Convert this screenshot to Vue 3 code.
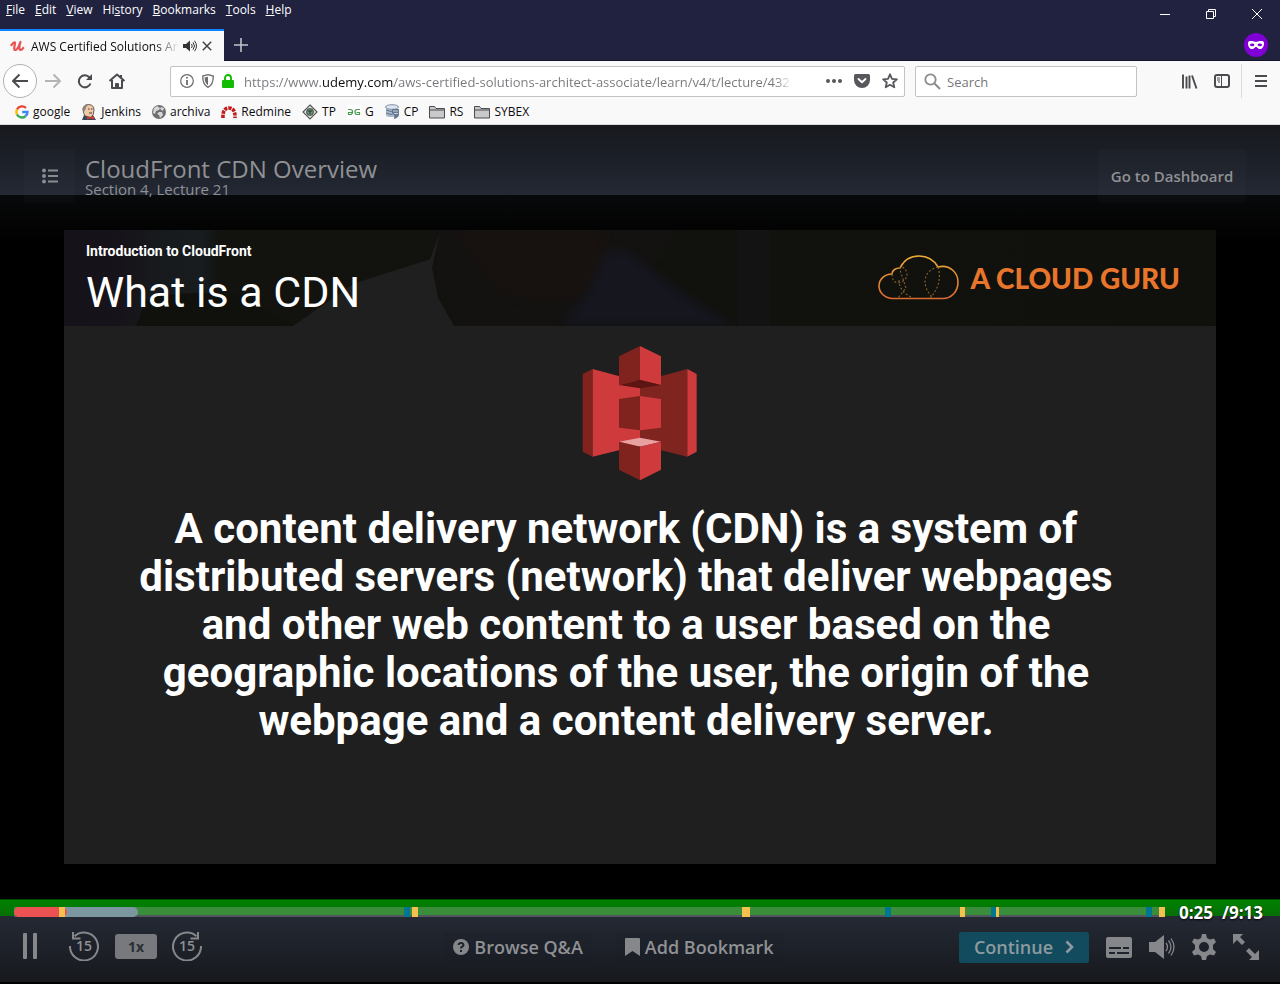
<script setup>
import { ref } from 'vue'

const menus = [
  ['', 'F', 'ile'], ['', 'E', 'dit'], ['', 'V', 'iew'], ['Hi', 's', 'tory'],
  ['', 'B', 'ookmarks'], ['', 'T', 'ools'], ['', 'H', 'elp'],
]
const bookmarks = [
  { name: 'google', icon: 'google' },
  { name: 'Jenkins', icon: 'jenkins' },
  { name: 'archiva', icon: 'globe' },
  { name: 'Redmine', icon: 'redmine' },
  { name: 'TP', icon: 'tp' },
  { name: 'G', icon: 'gg' },
  { name: 'CP', icon: 'db' },
  { name: 'RS', icon: 'folder' },
  { name: 'SYBEX', icon: 'folder' },
]
const url = ref('https://www.udemy.com/aws-certified-solutions-architect-associate/learn/v4/t/lecture/4321')
const search = ref('')

const trackLength = 1151
const markers = [
  { at: 45, size: 6, kind: 'note' },
  { at: 390, size: 6, kind: 'quiz' },
  { at: 398, size: 6, kind: 'note' },
  { at: 728, size: 8, kind: 'note' },
  { at: 871, size: 6, kind: 'quiz' },
  { at: 946, size: 5, kind: 'note' },
  { at: 977, size: 5, kind: 'quiz' },
  { at: 982, size: 3, kind: 'note' },
  { at: 1132, size: 6, kind: 'quiz' },
  { at: 1145, size: 6, kind: 'note' },
]
const share = (n) => `${(n / trackLength) * 100}%`
</script>

<template>
  <div class="window">
    <header class="titlebar">
      <div class="menu-row">
        <nav class="menus">
          <button v-for="m in menus" :key="m.join('')" class="menu">{{ m[0] }}<u>{{ m[1] }}</u>{{ m[2] }}</button>
        </nav>
        <div class="window-buttons">
          <button aria-label="Minimize"><svg width="12" height="12" viewBox="0 0 12 12"><path d="M1 6.500h10" /></svg></button>
          <button aria-label="Restore"><svg width="12" height="12" viewBox="0 0 12 12"><path d="M1.500 3.500h7v7h-7zM3.500 3.500v-2h7v7h-2" /></svg></button>
          <button aria-label="Close"><svg width="12" height="12" viewBox="0 0 12 12"><path d="M1 1l10 10M11 1L1 11" /></svg></button>
        </div>
      </div>
      <div class="tab-row">
        <div class="tab">
          <svg class="tab-logo" width="15" height="14" viewBox="0 0 15 14"><path d="M1.500 6C3 4 5 2.500 5 4c0 1.800-2 7 .3 7C8 11 9.500 5 10.500 3 9.500 6 8.500 11 10.600 11c1.300 0 2-1 2.600-2" fill="none" stroke="#ec5252" stroke-width="2.200" stroke-linecap="round" stroke-linejoin="round" /></svg>
          <span class="tab-title">AWS Certified Solutions Architect</span>
          <button aria-label="Mute tab"><svg width="14" height="12" viewBox="0 0 14 12"><path d="M0 4h3l4-3.500v11L3 8H0z" fill="#333" /><path d="M8.500 4q1.500 2 0 4M10 2.300q3 3.700 0 7.400M11.500.8q4 5.200 0 10.400" fill="none" stroke="#333" /></svg></button>
          <button class="tab-close" aria-label="Close tab"><svg width="10" height="10" viewBox="0 0 10 10"><path d="M.8.8l8.400 8.400M9.200.8L.8 9.200" stroke="#444" stroke-width="1.500" /></svg></button>
        </div>
        <button class="new-tab" aria-label="New tab"><svg width="14" height="14" viewBox="0 0 14 14"><path d="M7 0v14M0 7h14" stroke="#c3c3cb" stroke-width="1.600" /></svg></button>
        <svg class="private" width="24" height="24" viewBox="0 0 24 24"><circle cx="12" cy="12" r="12" fill="#8000d7" /><path d="M4 10c0-2 2-2.300 4-2 2 .2 2.500 1 4 1s2-.8 4-1c2-.3 4 0 4 2 0 4-2 6-4 6-2.500 0-2.500-2-4-2s-1.500 2-4 2c-2 0-4-2-4-6z" fill="#fff" /><ellipse cx="8.200" cy="11.900" rx="2.200" ry="1.400" fill="#8000d7" /><ellipse cx="15.800" cy="11.900" rx="2.200" ry="1.400" fill="#8000d7" /></svg>
      </div>
    </header>

    <div class="toolbar">
      <div class="nav-buttons">
        <button class="back" aria-label="Back"><svg width="18" height="16" viewBox="0 0 18 16"><path d="M17 8H2.500M8.500 1.500L2 8l6.500 6.500" /></svg></button>
        <button class="forward" aria-label="Forward"><svg width="18" height="16" viewBox="0 0 18 16"><path d="M1 8h14.500M9.500 1.500L16 8l-6.500 6.500" /></svg></button>
        <button class="reload" aria-label="Reload"><svg width="16" height="16" viewBox="0 0 16 16"><path d="M12.500 4.500A6 6 0 1 0 13.500 10.500" /><path d="M15 1V7H9z" /></svg></button>
        <button class="home" aria-label="Home"><svg width="18" height="16" viewBox="0 0 18 16"><path d="M1.500 8L9 1.500 16.500 8M4 7v8h10V7" /><path d="M8 15v-4h2v4" /><path d="M13 2v3" /></svg></button>
      </div>
      <div class="address">
        <svg width="14" height="14" viewBox="0 0 14 14"><circle cx="7" cy="7" r="6.300" fill="none" stroke="#6b6b70" stroke-width="1.200" /><path d="M7 3v1.600M7 6v5" stroke="#6b6b70" stroke-width="1.800" /></svg>
        <svg width="12" height="14" viewBox="0 0 12 14"><path d="M6 .7L11.300 2C11.300 8 10 11.500 6 13.300 2 11.500.7 8 .7 2z" fill="none" stroke="#6b6b70" stroke-width="1.300" /><path d="M6 2.800v8.500C3.800 10 2.800 8 2.600 3.600z" fill="#6b6b70" /></svg>
        <svg width="12" height="14" viewBox="0 0 12 14"><path d="M3 7V4a3 3 0 0 1 6 0v3" fill="none" stroke="#12bc00" stroke-width="1.900" /><rect y="6" width="12" height="8" rx="1" fill="#12bc00" /></svg>
        <input v-model="url" class="url" aria-label="Address" spellcheck="false">
        <button aria-label="Page actions"><svg width="16" height="4" viewBox="0 0 16 4"><circle cx="2" cy="2" r="2" /><circle cx="8" cy="2" r="2" /><circle cx="14" cy="2" r="2" /></svg></button>
        <button aria-label="Save to Pocket"><svg width="16" height="14" viewBox="0 0 16 14"><path d="M1.500 0h13Q16 0 16 1.500V6A8 8 0 0 1 0 6V1.500Q0 0 1.500 0z" /><path d="M4.500 5L8 8.300 11.500 5" fill="none" stroke="#fff" stroke-width="1.900" stroke-linecap="round" stroke-linejoin="round" /></svg></button>
        <button aria-label="Bookmark this page"><svg width="16" height="16" viewBox="0 0 16 16"><path d="M8 1.300l2 4.500 4.900.5-3.700 3.200 1.100 4.800L8 11.800l-4.300 2.500 1.100-4.800L1.100 6.300 6 5.800z" fill="none" stroke="#57575c" stroke-width="1.800" stroke-linejoin="round" /></svg></button>
      </div>
      <div class="search">
        <svg width="17" height="17" viewBox="0 0 17 17"><circle cx="6.500" cy="6.500" r="5.200" fill="none" stroke="#8b8b8f" stroke-width="1.800" /><path d="M10.500 10.500l5.500 5.500" stroke="#8b8b8f" stroke-width="2" /></svg>
        <input v-model="search" aria-label="Search" placeholder="Search">
      </div>
      <div class="tool-buttons">
        <button aria-label="Library"><svg width="16" height="15" viewBox="0 0 16 15"><path d="M1 .5v14M4.500 2.500v12M7.500 1.500v13M10 1.500l4.500 13" fill="none" stroke="#4a4a4f" stroke-width="1.900" /></svg></button>
        <button aria-label="Sidebars"><svg width="16" height="14" viewBox="0 0 16 14"><rect x="1" y="1" width="14" height="12" rx="2" fill="none" stroke="#4a4a4f" stroke-width="2" /><path d="M7.500 1v12" stroke="#4a4a4f" /><path d="M3 4h3M3 6h3M4 8h2" stroke="#4a4a4f" /></svg></button>
        <button class="app-menu" aria-label="Open menu"><svg width="12" height="12" viewBox="0 0 12 12"><path d="M0 1h12M0 6h12M0 11h12" stroke="#4a4a4f" stroke-width="1.900" /></svg></button>
      </div>
    </div>

    <nav class="bookmarks">
      <a v-for="b in bookmarks" :key="b.name" href="#">
        <svg v-if="b.icon === 'google'" width="14" height="14" viewBox="0 0 14 14" fill="none" stroke-width="2.400"><path d="M11 3A5.600 5.600 0 0 0 2 4.500" stroke="#ea4335" /><path d="M2 4.500a5.600 5.600 0 0 0 0 5" stroke="#fbbc05" /><path d="M2 9.500a5.600 5.600 0 0 0 8.500 1.700" stroke="#34a853" /><path d="M10.500 11.200Q12.500 9.500 12.500 7H7.200" stroke="#4285f4" /></svg>
        <svg v-else-if="b.icon === 'jenkins'" width="16" height="16" viewBox="0 0 16 16"><path d="M1 16l2-5 9 0 3 5z" fill="#34495c" /><path d="M4 12q-2-3-2-7Q3 .5 8 .5q5 .5 5 5.500 0 5-3 7.500z" fill="#edc9a5" stroke="#4a3a35" stroke-width=".8" /><path d="M3 8Q0 4 3 2q2-3 6-1.500Q5 1 4.500 5z" fill="#8d8279" /><path d="M7 5h1.500M10 5h1.500M8 9h3" stroke="#4a3a35" /><path d="M6 12l3 1.500 4-1.500v3.500l-4-1-3 1z" fill="#d33833" /></svg>
        <svg v-else-if="b.icon === 'globe'" width="14" height="14" viewBox="0 0 14 14"><circle cx="7" cy="7" r="7" fill="#6f6f72" /><path d="M2 3l3-2 3 2-1 2-3 1-1 3-2-1zM9 2l3 1-1 3-3-2zM7 7l3 0 1 3-3 3-1-3-2-1z" fill="#d7d7d9" /></svg>
        <svg v-else-if="b.icon === 'redmine'" width="16" height="12" viewBox="0 0 16 12"><path d="M2 12Q1.500 2 8 2t6 10" fill="none" stroke="#c61a1a" stroke-width="3.600" stroke-dasharray="3.200 1" /></svg>
        <svg v-else-if="b.icon === 'tp'" width="16" height="16" viewBox="0 0 16 16"><path d="M8 1l7 7-7 7-7-7z" fill="#e6eae6" stroke="#555" stroke-width="1.200" /><circle cx="8" cy="8" r="3.400" fill="#6d9577" stroke="#444" /><path d="M6 7h4M8 7v3" stroke="#173d23" /></svg>
        <svg v-else-if="b.icon === 'gg'" width="14" height="14" viewBox="0 0 14 14"><rect width="14" height="14" fill="#fff" /><path d="M1 4.500h2.500q2 0 2 2.500T3.500 9.500H1.500V7.500H5M13 4.500h-3q-2 0-2 2.500t2 2.500h2.500V7.500H9.500" fill="none" stroke="#4b9a51" stroke-width="1.200" /></svg>
        <svg v-else-if="b.icon === 'db'" width="15" height="15" viewBox="0 0 15 15"><path d="M1 3v8q0 2 5 2t5-2V3z" fill="#a9b8cb" /><ellipse cx="7" cy="3" rx="6.500" ry="2.300" fill="#dce4ee" stroke="#8192a8" /><path d="M1 6q5 3 10 0M1 9q5 3 10 0" stroke="#61738b" fill="none" /><path d="M7 5h7v6q-1 3-5 4 1-5-2-6z" fill="#667992" /><path d="M8 7h5M9 9.500h4" stroke="#c5d0dd" /></svg>
        <svg v-else width="16" height="14" viewBox="0 0 16 14"><path d="M.5 13V1.500h5l1.500 2h8.500V13z" fill="#c9c9cb" stroke="#4a4a4f" /><path d="M1 5h14" stroke="#4a4a4f" /></svg>
        <span>{{ b.name }}</span>
      </a>
    </nav>

    <main class="player">
      <header class="lecture-bar">
        <button class="outline" aria-label="Course content"><svg width="16" height="16" viewBox="0 0 16 16"><g fill="#898b8f"><circle cx="2" cy="2.500" r="2" /><circle cx="2" cy="8" r="2" /><circle cx="2" cy="13.500" r="2" /></g><path d="M6 2.500h10M6 8h10M6 13.500h10" stroke="#898b8f" stroke-width="1.800" /></svg></button>
        <div class="lecture-title">
          <h1>CloudFront CDN Overview</h1>
          <p>Section 4, Lecture 21</p>
        </div>
        <button class="dashboard">Go to Dashboard</button>
      </header>

      <section class="stage">
        <article class="slide">
          <header class="slide-head">
            <svg class="backdrop" viewBox="0 0 1152 95" preserveAspectRatio="none" aria-hidden="true">
              <defs>
                <linearGradient id="shade"><stop offset="0" stop-color="#151219" /><stop offset=".05" stop-color="#17131a" /><stop offset=".08" stop-color="#171a1c" /><stop offset=".12" stop-color="#181c1f" /><stop offset=".135" stop-color="#12120f" /><stop offset=".6" stop-color="#11110e" /><stop offset="1" stop-color="#10100c" /></linearGradient>
                <filter id="soft" color-interpolation-filters="sRGB"><feGaussianBlur stdDeviation="4" /></filter>
              </defs>
              <path d="M0 0h1152v95H0z" fill="url(#shade)" />
              <path d="M72 95l10-26q30-10 90-5l60 31z" fill="#10110d" />
              <path d="M374 0h236l-30 60-90 35h-98l-20-50z" fill="#131210" />
              <g filter="url(#soft)">
                <path d="M390 0h150v55q-60 30-110 0z" fill="#1a1110" opacity=".7" />
                <path d="M496 95l28-35 18-40 20 0 60 45 50 30z" fill="#15161e" />
              </g>
              <path d="M229 95l61-42 76-24 10-27-8 35 6 30 16 28z" fill="#1f1f20" />
              <path d="M674 0h32v95h-32z" fill="#131313" />
            </svg>
            <div class="slide-title"><p>Introduction to CloudFront</p><h2>What is a CDN</h2></div>
            <div class="guru">
              <svg width="82" height="46" viewBox="0 0 82 46" fill="none"><defs><linearGradient id="amber" x2="0" y2="1"><stop stop-color="#edae35" /><stop offset="1" stop-color="#dc6b32" /></linearGradient></defs><path d="M14 43.500C6 43 1 37 1 31c0-7 6-12 13-12 0-4 4-6 8-6C26 5 33 1 41 1s15 4 19 11c12-3 20 6 20 15 0 10-7 16.500-15 16.500z" stroke="url(#amber)" stroke-width="1.600" /><path d="M14 19q0 8 6 9 9-2 9-9-1-7-7-7M21 12l7 21-8 10M21 25q0 12 14 18M60 12q-12 3-13 14 0 9 8 17M60 12q5 17-8 31" stroke="#8b622b" stroke-width="1.100" stroke-dasharray="2 2" /></svg>
              <span>A CLOUD GURU</span>
            </div>
          </header>
          <svg class="bucket" width="160" height="160" viewBox="0 0 480 480">
            <path d="M68 117l30-15v263l-30-15z" fill="#80231f" /><path d="M98 102l142 38v190L98 365z" fill="#cf3a3d" />
            <path d="M382 102L240 140v190l142 35z" fill="#7f241f" /><path d="M382 102l28 15v233l-28 15z" fill="#cf3a3d" />
            <path d="M240 33l-63 31v86l63-15z" fill="#80231f" /><path d="M240 33l63 31v86l-63-15z" fill="#cf3a3d" /><path d="M177 150l63-15 63 15-63 10z" fill="#5c1512" />
            <path d="M177 192l63-9v103l-63-8z" fill="#80231f" /><path d="M240 183l63 9v86l-63 8z" fill="#cf3a3d" />
            <path d="M177 320l63-12 63 12-63 15z" fill="#e9a0a1" /><path d="M177 320l63 15v101l-63-32z" fill="#80231f" /><path d="M303 320l-63 15v101l63-32z" fill="#cf3a3d" />
          </svg>
          <p class="definition">A content delivery network (CDN) is a system of<br>distributed servers (network) that deliver webpages<br>and other web content to a user based on the<br>geographic locations of the user, the origin of the<br>webpage and a content delivery server.</p>
        </article>
      </section>

      <footer>
        <div class="progress-row">
          <div class="track" role="progressbar" aria-label="Lecture progress" aria-valuenow="25" aria-valuemax="553">
            <i class="buffered" :style="{ width: share(124) }"></i>
            <i class="played" :style="{ width: share(53) }"></i>
            <i v-for="m in markers" :key="m.at" :class="['marker', m.kind]" :style="{ left: share(m.at), width: share(m.size) }"></i>
          </div>
          <div class="time"><span>0:25</span><span>/9:13</span></div>
        </div>
        <div class="controls">
          <div class="group left">
            <button aria-label="Pause"><svg width="16" height="26" viewBox="0 0 16 26"><rect x="1" width="4" height="26" rx="1" /><rect x="11" width="4" height="26" rx="1" /></svg></button>
            <button class="skip" aria-label="Back 15 seconds"><svg width="30" height="30" viewBox="0 0 30 30"><path d="M1 15A14 14 0 1 0 5.500 5.200M4 1v6.500h7.500" /></svg><span>15</span></button>
            <button class="rate">1x</button>
            <button class="skip" aria-label="Forward 15 seconds"><svg width="30" height="30" viewBox="0 0 30 30"><path d="M29 15A14 14 0 1 1 24.500 5.200M26 1v6.500h-7.500" /></svg><span>15</span></button>
          </div>
          <div class="group middle">
            <button class="labelled"><svg width="16" height="16" viewBox="0 0 16 16"><circle cx="8" cy="8" r="8" /><path d="M5.500 6Q5.700 4 8 4t2.500 2Q10.500 7 9.200 7.700 8 8.300 8 9.500M8 11v2" fill="none" stroke="#1f242c" stroke-width="2" /></svg>Browse Q&amp;A</button>
            <button class="labelled"><svg width="15" height="18" viewBox="0 0 15 18"><path d="M1 0h13q1 0 1 1v17l-7.500-5L0 18V1q0-1 1-1z" /></svg>Add Bookmark</button>
          </div>
          <div class="group right">
            <button class="continue">Continue<svg width="9" height="14" viewBox="0 0 9 14"><path d="M1.500 1.500L7 7l-5.500 5.500" fill="none" stroke="#8d9a9f" stroke-width="2.600" /></svg></button>
            <button aria-label="Captions"><svg width="26" height="21" viewBox="0 0 26 21"><rect width="26" height="21" rx="2" /><path d="M3 11h12M17 11h6M3 16h6M11 16h12" stroke="#1f242c" stroke-width="2" /></svg></button>
            <button aria-label="Volume"><svg width="26" height="24" viewBox="0 0 26 24"><path d="M0 7h6l9-7v24l-9-7H0z" /><path d="M17 8q3 4 0 8M19.500 5.500q5 6.500 0 13M22 3.500q6 8.500 0 17" fill="none" stroke="#85878b" stroke-width="1.300" /></svg></button>
            <button aria-label="Settings"><svg width="24" height="26" viewBox="0 0 24 26"><path fill-rule="evenodd" d="M10 0h4l1 4 3 1.500 4-1 2 3.500-3 3v4l3 3-2 3.500-4-1-3 1.500-1 4h-4l-1-4-3-1.500-4 1L0 18l3-3v-4L0 8l2-3.500 4 1L9 4zM12 8a5 5 0 1 0 0 10 5 5 0 0 0 0-10z" /></svg></button>
            <button aria-label="Fullscreen"><svg width="26" height="26" viewBox="0 0 26 26"><path d="M0 0h10L7 3l5 5-3 3-5-5-4 4zM26 26H16l3-3-6-6 3-3 6 6 4-4z" /></svg></button>
          </div>
        </div>
      </footer>
    </main>
  </div>
</template>

<style>
body { margin: 0; background: #000; }
</style>

<style scoped>
* { box-sizing: border-box; }
button { font: inherit; color: inherit; background: none; border: 0; padding: 0; cursor: pointer; }
svg { display: block; flex: none; }
h1, h2, p { margin: 0; }
input { border: 0; outline: 0; background: none; min-width: 0; padding: 0; font: 13px "Open Sans", sans-serif; }
.window { min-height: 100vh; display: flex; flex-direction: column; font: 12px "Open Sans", sans-serif; color: #0c0c0d; }

.titlebar { background: #20223f; height: 61px; border-bottom: 1px solid #14152b; }
.menu-row { display: flex; justify-content: space-between; height: 29px; }
.menus { display: flex; gap: 10px; padding-left: 6px; height: 20px; color: #fff; }
.menu { line-height: 20px; }
.window-buttons { display: flex; height: 28px; }
.window-buttons button { width: 46px; display: grid; place-items: center; }
.window-buttons path { fill: none; stroke: #fff; }
.tab-row { display: flex; height: 32px; }
.tab { width: 224px; background: #f9f9fa; border-top: 2px solid #0a84ff; display: flex; align-items: center; padding: 0 12px 0 10px; }
.tab-logo { margin-right: 6px; }
.tab-title { flex: 1; white-space: nowrap; overflow: hidden; margin-right: 4px; mask-image: linear-gradient(90deg, #000 84%, transparent); }
.tab-close { margin-left: 5px; }
.new-tab { width: 33px; display: grid; place-items: center; }
.private { margin: 4px 12px 0 auto; }

.toolbar { display: flex; align-items: center; height: 40px; background: #f9f9fa; padding-left: 3px; }
.nav-buttons { display: flex; align-items: center; width: 167px; flex: none; }
.nav-buttons button { width: 32px; display: grid; place-items: center; }
.nav-buttons path { stroke: #4a4a4f; stroke-width: 2; fill: none; stroke-linejoin: round; }
.nav-buttons .back { width: 34px; height: 34px; border: 1px solid #b1b1b3; border-radius: 50%; background: #fff; }
.nav-buttons .forward path { stroke: #b4b4b6; }
.nav-buttons .reload path:last-child { fill: #4a4a4f; stroke: none; }
.address, .search { height: 31px; background: #fff; border: 1px solid #c3c3c4; border-radius: 2px; display: flex; align-items: center; }
.address { flex: 1; gap: 8px; padding: 0 6px 0 9px; min-width: 0; fill: #57575c; }
.url { flex: 1; height: 20px; margin: 2px 22px 0 2px; color: transparent; background: linear-gradient(90deg, #77777b 78px, #0c0c0d 78px, #0c0c0d 150px, #77777b 150px, #77777b 97%, transparent); background-clip: text; }
.address button { margin-left: 4px; }
.search { width: 222px; margin-left: 10px; padding: 0 8px; gap: 6px; }
.search input { flex: 1; height: 20px; margin-top: 2px; color: #0c0c0d; }
.search input::placeholder { color: #77777b; }
.tool-buttons { display: flex; align-items: center; gap: 16px; margin-left: 45px; }
.app-menu { border-left: 1px solid #dcdcde; height: 34px; width: 39px; margin-left: -5px; display: grid; place-items: center; }

.bookmarks { display: flex; gap: 11px; height: 24px; padding: 0 15px 2px; align-items: center; background: #f9f9fa; border-bottom: 1px solid #dadadc; flex: none; }
.bookmarks a { display: flex; align-items: center; gap: 4px; color: #0c0c0d; text-decoration: none; }

.player { flex: 1; display: flex; flex-direction: column; background: #000; }
.lecture-bar { position: relative; height: 70px; display: flex; align-items: flex-start; padding: 24px 34px 0 24px; background: linear-gradient(#17191d, #1c2028 50%, #232834); color: #8f9194; }
.outline, .dashboard { height: 54px; border-radius: 2px; background: rgba(128, 128, 128, .04); display: grid; place-items: center; }
.outline { width: 51px; }
.lecture-title { flex: 1; padding-left: 10px; }
.lecture-title h1 { font-size: 24px; line-height: 28px; font-weight: 400; padding-top: 6px; }
.lecture-title p { font-size: 15px; line-height: 12px; }
.dashboard { width: 148px; font-size: 15px; font-weight: 600; }
.stage { flex: 1; padding: 35px 5%; background: linear-gradient(#08090a, #000 50px); }
.slide { background: #1f1f1f; aspect-ratio: 1152 / 634; font-family: Roboto, sans-serif; color: #fff; }
.slide-head { position: relative; display: flex; justify-content: space-between; align-items: flex-start; height: 96px; padding: 0 36px 0 22px; }
.backdrop { position: absolute; inset: 0; width: 100%; height: 100%; }
.slide-title, .guru { position: relative; }
.slide-title p { font-size: 14px; font-weight: 700; line-height: 18px; padding-top: 12px; }
.slide-title h2 { font-size: 43px; font-weight: 400; line-height: 64px; }
.guru { display: flex; align-items: center; gap: 11px; margin-top: 25px; color: #e8752c; font: 900 28px/46px Lato, sans-serif; }
.bucket { margin: 9px auto 10px; }
.definition { font-size: 42px; line-height: 48px; font-weight: 700; text-align: center; padding-right: 28px; }

.progress-row { height: 17px; display: flex; padding: 8px 17px 0 14px; background: linear-gradient(#054a05 1px, #008000 1px, #067006); }
.track { position: relative; flex: 1; height: 10px; background: linear-gradient(#3a8d3a 8px, #52565e 8px); }
.track i { position: absolute; top: 0; bottom: 0; left: 0; }
.buffered { background: #7d97a0; border-radius: 5px; }
.played { background: #ec5252; border-radius: 5px; }
.marker.note { background: #f4c150; }
.marker.quiz { background: #007791; }
.time { display: flex; gap: 9px; margin-left: 14px; color: #fff; font-size: 17px; font-weight: 700; line-height: 11px; position: relative; text-shadow: 0 1px 2px #000; }
.controls { display: grid; grid-template-columns: 1fr auto 1fr; align-items: center; height: 69px; padding: 0 21px 7px 22px; background: linear-gradient(#242934, #17191d 95%, #000 96%); color: #8f9194; fill: #85878b; }
.group { display: flex; align-items: center; }
.skip { position: relative; }
.skip path { fill: none; stroke: #85878b; stroke-width: 2; }
.skip span { position: absolute; inset: 0; text-align: center; font-size: 14px; font-weight: 600; line-height: 30px; }
.left { padding-bottom: 2px; }
.left .skip:nth-child(2) { margin-left: 31px; }
.rate { width: 42px; height: 25px; border-radius: 3px; background: #77797d; color: #2a2e35; font-size: 14px; font-weight: 700; margin: 0 15px 0 16px; }
.middle { gap: 22px; margin-right: 54px; font-size: 18px; font-weight: 600; }
.labelled { display: flex; align-items: center; gap: 5px; height: 31px; padding: 0 10px; background: rgba(25, 30, 38, .2); }
.right { justify-content: flex-end; gap: 17px; }
.continue { display: flex; align-items: center; justify-content: center; gap: 12px; width: 130px; height: 31px; border-radius: 2px; background: #114b5d; color: #8d9a9f; font-size: 18px; font-weight: 600; }
</style>
